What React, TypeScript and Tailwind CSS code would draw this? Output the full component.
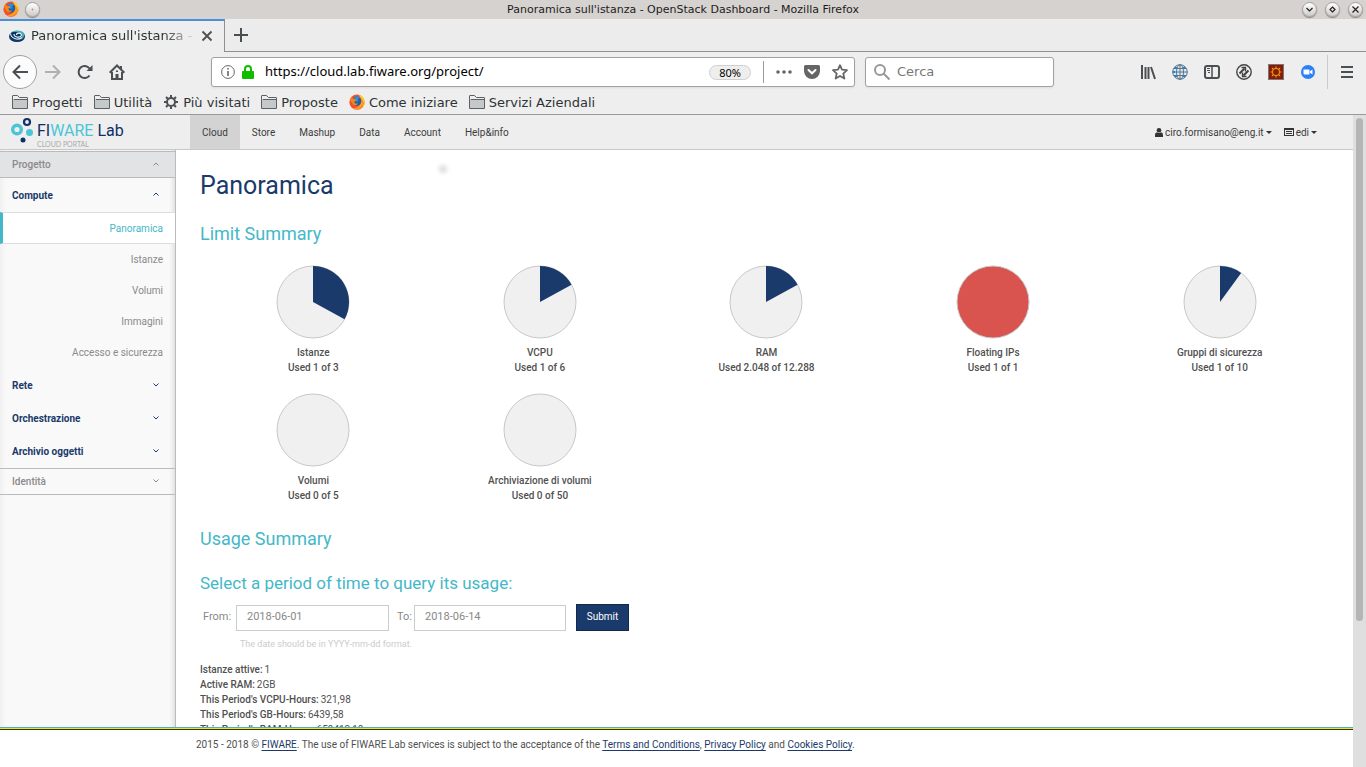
import React from "react";

const NAVY = "#1a3a6b";

function FirefoxLogo() {
  return (
    <svg viewBox="0 0 16 16" className="size-4 shrink-0" aria-hidden="true">
      <circle cx="8" cy="8.2" r="7.6" fill="#f4502a" />
      <path d="M10 .8A7.6 7.6 0 0 1 13 14c2-3 2-6 0-8.500 C12 4 10.500 3 10 .8Z" fill="#ffce2e" />
      <path d="M12 4a7 7 0 0 1 1 9 7 7 0 0 1-9 1c6 0 9-5 8-10Z" fill="#ff9a1b" />
      <circle cx="7.600" cy="7.200" r="4.600" fill="#1e5fae" />
      <path d="M5 3.500C7 1.800 10 2.400 11 4L8.500 5.500 10 7 7.500 8 6 6Z" fill="#2b91d9" />
      <path d="M1 5.500 2.500 2.500 3.500 4.500 6 5 7.500 6.500 5.500 7.500 6 9.500 9 9.500C8 11.500 5 12 3.500 10Z" fill="#f98416" />
    </svg>
  );
}

function FolderIcon() {
  return (
    <svg viewBox="0 0 16 16" className="size-4 shrink-0" fill="none" stroke="#5c6062" aria-hidden="true">
      <path d="M.5 14.500V2Q.5 1.500 1 1.500H5.500L7.500 3.500H15Q15.500 3.500 15.500 4V14.500Z" fill="#c6c9ca" />
      <path d="M1 2H5.300L7.300 4H15V5H1Z" fill="#eee" stroke="none" />
      <path d="M2 5.500H15" />
    </svg>
  );
}

function GearIcon() {
  return (
    <svg viewBox="0 0 16 16" className="size-4 shrink-0" fill="none" stroke="#4a4f51" aria-hidden="true">
      <circle cx="8" cy="8" r="4" strokeWidth="2" />
      <path
        d="M8 1v2.500M8 12.500V15M1 8h2.500M12.500 8H15M3 3l1.800 1.800M11.200 11.200 13 13M13 3l-1.800 1.800M4.800 11.200 3 13"
        strokeWidth="2"
      />
    </svg>
  );
}

function WindowButton({ label, children }: { label: string; children?: React.ReactNode }) {
  return (
    <button
      aria-label={label}
      className="flex size-[15px] items-center justify-center rounded-full border border-[#a3a09d] bg-linear-to-b from-white to-[#cfccc9] shadow-[0_1px_1px_#8a8784]"
    >
      <svg viewBox="0 0 9 9" className="size-[9px]" fill="none" stroke="#222" strokeWidth="1.200">
        {children}
      </svg>
    </button>
  );
}

function TitleBar() {
  return (
    <header className="grid h-[19px] shrink-0 grid-cols-[1fr_auto_1fr] items-center bg-[#d6d2cf] px-[3px] pb-px">
      <div className="flex items-center gap-[6px]">
        <FirefoxLogo />
        <WindowButton label="Menu">
          <circle cx="4.500" cy="4.500" r=".5" stroke="#888" strokeWidth="1" />
        </WindowButton>
      </div>
      <h1 className="text-[11px] leading-none text-[#1c1c1c]">
        Panoramica sull'istanza - OpenStack Dashboard - Mozilla Firefox
      </h1>
      <div className="flex items-center justify-end gap-2">
        <WindowButton label="Riduci"><path d="M1.500 3 4.500 6 7.500 3" /></WindowButton>
        <WindowButton label="Ingrandisci"><path d="M4.500 2 7 4.500 4.500 7 2 4.500Z" /></WindowButton>
        <WindowButton label="Chiudi"><path d="M1.500 1.500 7.500 7.500M7.500 1.500 1.500 7.500" /></WindowButton>
      </div>
    </header>
  );
}

function TabStrip() {
  return (
    <div className="flex h-[33px] shrink-0 bg-[#ececec] text-[13px] text-[#2e3436]">
      <div className="flex w-[225px] items-center border-t-2 border-r border-t-[#4a90d9] border-r-[#8f8f8f] bg-[#eee] pr-[11px] pb-px pl-2">
        <svg viewBox="0 0 18 16" className="mr-[5px] h-4 w-[18px] shrink-0" fill="none" aria-hidden="true">
          <ellipse cx="9" cy="8.500" rx="8" ry="5.500" fill="#0b3566" />
          <path d="M3 4.500C7 1.500 14 2 16 5c1 2 0 5-3 6.500 2-3 1-6-3-7-2.500-.6-5-.5-7 0Z" fill="#4ba8bb" />
          <path d="M2.500 5.500C3 11 11 12.500 14 9.500M6 6C6 10 13 10 13.500 7C13 4.500 8.500 4.500 8.500 7" stroke="#e8f4f8" strokeWidth="1.100" />
        </svg>
        <span className="min-w-0 flex-1 overflow-hidden whitespace-nowrap [mask-image:linear-gradient(to_right,black_80%,transparent)]">
          Panoramica sull'istanza - OpenStack
        </span>
        <button aria-label="Chiudi scheda" className="ml-1">
          <svg viewBox="0 0 12 12" className="size-3" stroke="#4a4f51" strokeWidth="1.800">
            <path d="M1.500 1.500 10.500 10.500M10.500 1.500 1.500 10.500" />
          </svg>
        </button>
      </div>
      <div className="flex flex-1 items-center border-b border-[#8f8f8f] pl-2">
        <button aria-label="Nuova scheda">
          <svg viewBox="0 0 16 16" className="size-4" stroke="#4a4f51" strokeWidth="2">
            <path d="M8 1V15M1 8H15" />
          </svg>
        </button>
      </div>
    </div>
  );
}

function NavBar() {
  return (
    <div className="flex h-10 shrink-0 items-center bg-[#eee] pr-[11px] pl-[3px]">
      <nav className="flex items-center">
        <button aria-label="Indietro" className="flex size-[34px] items-center justify-center rounded-full border border-[#a0a0a0] bg-[#fcfcfc]">
          <svg viewBox="0 0 16 16" className="size-4" fill="none" stroke="#4a4f51" strokeWidth="2"><path d="M16 8H1.500M8 1.500 1.500 8 8 14.500" /></svg>
        </button>
        <button aria-label="Avanti" className="ml-2">
          <svg viewBox="0 0 16 16" className="size-4" fill="none" stroke="#aeb0b1" strokeWidth="2"><path d="M0 8H14.500M8 1.500 14.500 8 8 14.500" /></svg>
        </button>
        <button aria-label="Ricarica" className="ml-4">
          <svg viewBox="0 0 16 16" className="size-4" fill="none" stroke="#4a4f51" strokeWidth="2"><path d="M12.500 11.500A6 6 0 1 1 12.500 4.500" /><path d="M15.500 1V7H9.500Z" fill="#4a4f51" stroke="none" /></svg>
        </button>
        <button aria-label="Pagina iniziale" className="ml-4">
          <svg viewBox="0 0 16 16" className="size-4" fill="none" stroke="#4a4f51" strokeWidth="2"><path d="M.7 8.700 8 1.500 15.300 8.700M3 8V15H13V8" /><path d="M8 10V15" strokeWidth="3" /><path d="M8 6.500v1.500M12 2V5" strokeWidth="2" /></svg>
        </button>
      </nav>
      <div className="ml-[86px] flex h-[30px] min-w-0 flex-[627] items-center rounded-[3px] border border-[#a1a1a1] bg-white pr-[6px] pl-[9px] shadow-[0_1px_2px_#ddd]">
        <svg viewBox="0 0 14 14" className="size-[14px] shrink-0" fill="none" stroke="#666"><circle cx="7" cy="7" r="6.400" /><path d="M7 3V4.600M7 6V11" strokeWidth="1.600" /></svg>
        <svg viewBox="0 0 12 14" className="mx-[7px] h-[14px] w-3 shrink-0" fill="none"><rect y="6" width="12" height="8" rx="1" fill="#12bc00" /><path d="M3 6V4a3 3 0 0 1 6 0V6" stroke="#12bc00" strokeWidth="2" /></svg>
        <input aria-label="Indirizzo" defaultValue="https://cloud.lab.fiware.org/project/" className="min-w-0 flex-1 bg-transparent pl-1 font-['Noto_Sans',sans-serif] text-[13px] text-black outline-none" />
        <button className="h-[15px] w-[42px] rounded-full border border-[#cfcfcf] bg-[#eee] font-['Noto_Sans',sans-serif] text-[11px] leading-none text-black">80%</button>
        <span className="ml-3 h-[22px] w-px bg-[#999]" />
        <button aria-label="Azioni" className="ml-3">
          <svg viewBox="0 0 16 16" className="size-4" fill="#666"><circle cx="2" cy="8" r="1.800" /><circle cx="8" cy="8" r="1.800" /><circle cx="14" cy="8" r="1.800" /></svg>
        </button>
        <button aria-label="Salva in Pocket" className="ml-3">
          <svg viewBox="0 0 16 16" className="size-4"><path d="M1.500 1H14.500A1.500 1.500 0 0 1 16 2.500V7A8 8 0 0 1 0 7V2.500A1.500 1.500 0 0 1 1.500 1Z" fill="#666" /><path d="M4.500 6 8 9.300 11.500 6" fill="none" stroke="#fff" strokeWidth="2" strokeLinecap="round" /></svg>
        </button>
        <button aria-label="Aggiungi ai segnalibri" className="ml-3">
          <svg viewBox="0 0 16 16" className="size-4" fill="none" stroke="#666" strokeWidth="1.800" strokeLinejoin="round"><path d="M8 1.200 10 5.700 15 6.200 11.300 9.600 12.400 14.600 8 12 3.600 14.600 4.700 9.600 1 6.200 6 5.700Z" /></svg>
        </button>
      </div>
      <div className="ml-[10px] flex h-[30px] min-w-0 flex-[171] items-center rounded-[3px] border border-[#a1a1a1] bg-white px-2 shadow-[0_1px_2px_#ddd]">
        <svg viewBox="0 0 16 16" className="mr-[7px] size-4 shrink-0" fill="none" stroke="#999" strokeWidth="2"><circle cx="6" cy="6" r="5" /><path d="M9.500 9.500 15.500 15.500" /></svg>
        <input aria-label="Cerca" placeholder="Cerca" className="min-w-0 flex-1 bg-transparent text-[13px] outline-none placeholder:text-[#777]" />
      </div>
      <div className="ml-[86px] flex items-center gap-4">
        <button aria-label="Libreria"><svg viewBox="0 0 16 16" className="size-4" stroke="#4a4f51" strokeWidth="2"><path d="M2 1V15M5.500 3V15M8.500 3V15M11 3 15 15" /></svg></button>
        <button aria-label="Rete globale">
          <svg viewBox="0 0 16 16" className="size-4" fill="none" stroke="#5f7384"><circle cx="8" cy="8" r="7.300" fill="#dde9f2" /><ellipse cx="8" cy="8" rx="3.500" ry="7.300" /><path d="M8 .7V15.300M.7 8H15.300M2 4.500H14M2 11.500H14" /><path d="M3 3h2v2H3ZM11 3h2v2h-2ZM3 11h2v2H3ZM11 11h2v2h-2ZM1 7h2v2H1Z" fill="#1a84d9" stroke="none" /></svg>
        </button>
        <button aria-label="Barra laterale"><svg viewBox="0 0 16 16" className="size-4" fill="none" stroke="#4a4f51"><rect x="1" y="2" width="14" height="12" rx="2" strokeWidth="2" /><path d="M8 2V14" strokeWidth="1.500" /><path d="M3 4.500H6M3 6.500H6M4 8.500H6" /></svg></button>
        <button aria-label="Componente aggiuntivo"><svg viewBox="0 0 16 16" className="size-4" fill="none" stroke="#444"><circle cx="8" cy="8" r="7.200" strokeWidth="1.400" /><path d="M3.500 9.500 8.500 4.500M7.500 11.500 12.500 6.500" strokeWidth="2" /><path d="M5.500 3.500H9.500V7.500M6.500 8.500V12.500H10.500" strokeWidth="1.400" /></svg></button>
        <button aria-label="Strumenti"><svg viewBox="0 0 16 16" className="size-4" fill="none"><rect x=".5" y=".5" width="15" height="15" fill="#8c1b06" stroke="#777" /><circle cx="8" cy="8" r="3.500" stroke="#e0981c" strokeWidth="1.100" /><path d="M8 2.500V4.500M8 11.500V13.500M2.500 8H4.500M11.500 8H13.500M4 4 5.300 5.300M10.700 10.700 12 12M12 4 10.700 5.300M5.300 10.700 4 12" stroke="#e0981c" strokeWidth="1.200" /></svg></button>
        <button aria-label="Zoom"><svg viewBox="0 0 16 16" className="size-4"><circle cx="8" cy="8" r="7" fill="#2d7ff9" /><path d="M3.500 5.500H9.500V10.500H4.500Q3.500 10.500 3.500 9.500ZM10 7.300 12.500 5.500V10.500L10 8.700Z" fill="#fff" /></svg></button>
      </div>
      <span className="ml-[11px] h-[34px] w-px bg-[#ccc]" />
      <button aria-label="Apri menu" className="ml-[11px]"><svg viewBox="0 0 16 16" className="size-4" stroke="#4a4f51" strokeWidth="2"><path d="M2 3H14M2 8H14M2 13H14" /></svg></button>
    </div>
  );
}

const bookmarks = [
  { label: "Progetti", icon: <FolderIcon /> },
  { label: "Utilità", icon: <FolderIcon /> },
  { label: "Più visitati", icon: <GearIcon /> },
  { label: "Proposte", icon: <FolderIcon /> },
  { label: "Come iniziare", icon: <FirefoxLogo /> },
  { label: "Servizi Aziendali", icon: <FolderIcon /> },
];

function BookmarksBar() {
  return (
    <div className="flex h-[23px] shrink-0 items-center gap-[11px] border-b border-[#999] bg-[#eee] pb-[2px] pl-3 text-[13px] text-[#2e3436]">
      {bookmarks.map((b) => (
        <button key={b.label} className="flex items-center gap-1 leading-none">
          {b.icon}
          {b.label}
        </button>
      ))}
    </div>
  );
}

function Caret() {
  return <svg viewBox="0 0 6 3" className="h-[3px] w-[6px]" fill="#333"><path d="M0 0H6L3 3Z" /></svg>;
}

function PortalHeader() {
  return (
    <header className="flex h-[35px] shrink-0 items-stretch border-b border-[#c8c8c8] bg-[#eee] text-[10px] text-[#3c3c3c]">
      <a href="#home" className="flex w-[190px] gap-[3px] pl-[10px]">
        <svg viewBox="0 0 24 30" className="mt-[2px] h-[30px] w-6" fill="none" aria-hidden="true">
          <circle cx="7" cy="12.500" r="4.300" stroke="#4bc5d6" strokeWidth="3.400" />
          <circle cx="17" cy="5" r="3" stroke="#0f2f69" strokeWidth="2.200" />
          <circle cx="19.500" cy="15.500" r="3.500" fill="#4bc5d6" />
          <circle cx="13" cy="23" r="2.500" fill="#0f2f69" />
        </svg>
        <div className="flex flex-col pt-[6px]">
          <span className="text-[16px] leading-[19px] text-[#0f2f69]">
            FI<span className="text-[#4bc5d6]">WARE</span> Lab
          </span>
          <span className="font-[Lato,sans-serif] text-[7px] leading-[8px] text-[#aaa]">CLOUD PORTAL</span>
        </div>
      </a>
      <nav className="flex">
        {["Cloud", "Store", "Mashup", "Data", "Account", "Help&info"].map((item, i) => (
          <a key={item} href={`#${item}`} className={`flex items-center px-3 ${i === 0 ? "bg-[#d3d3d3]" : ""}`}>
            {item}
          </a>
        ))}
      </nav>
      <div className="ml-auto flex items-center gap-3 pr-9">
        <button className="flex items-center gap-[2px]">
          <svg viewBox="0 0 8 9" className="h-[9px] w-2" fill="#333"><circle cx="4" cy="2.300" r="2.300" /><path d="M0 9V7Q0 4.500 2 4.300 4 5.500 6 4.300 8 4.500 8 7V9Z" /></svg>
          ciro.formisano@eng.it
          <Caret />
        </button>
        <button className="flex items-center gap-[2px]">
          <svg viewBox="0 0 10 8" className="h-2 w-[10px]" fill="none" stroke="#333"><rect x=".5" y=".5" width="9" height="7" /><path d="M1 1.500H9M2 3.500H8M2 5.500H8" /></svg>
          edi
          <Caret />
        </button>
      </div>
    </header>
  );
}

function Chevron({ up = false }: { up?: boolean }) {
  return (
    <svg viewBox="0 0 6 4" className="mb-[2px] h-1 w-[6px]" fill="none" stroke="currentColor">
      {up ? <path d="M.5 3.500 3 1 5.500 3.500" /> : <path d="M.5 .5 3 3 5.500 .5" />}
    </svg>
  );
}

function Sidebar() {
  return (
    <aside className="w-[176px] shrink-0 border-r border-[#bbb] bg-[#f9f9f9] pt-px text-[10px] text-[#8a8a8a] shadow-[inset_-4px_0_4px_-2px_#ddd,inset_4px_0_4px_-2px_#eee]">
      <button className="flex h-[27px] w-full items-center justify-between border-y border-[#bbb] bg-[#e2e3e4] pr-4 pl-3 font-medium">
        Progetto <Chevron up />
      </button>
      <button className="flex h-[34px] w-full items-center justify-between pr-4 pl-3 font-bold text-[#1a3a6b]">
        Compute <Chevron up />
      </button>
      <nav className="flex flex-col text-right">
        <a href="#panoramica" className="flex h-8 items-center justify-end border-y border-l-[3px] border-y-[#ddd] border-l-[#44b8c8] bg-white pr-3 text-[#44b8c8]">
          Panoramica
        </a>
        {["Istanze", "Volumi", "Immagini", "Accesso e sicurezza"].map((t) => (
          <a key={t} href={`#${t}`} className="flex h-[31px] items-center justify-end pr-3">
            {t}
          </a>
        ))}
      </nav>
      <div className="pt-px">
        {["Rete", "Orchestrazione", "Archivio oggetti"].map((t) => (
          <button key={t} className="flex h-[33px] w-full items-center justify-between pr-4 pl-3 font-bold text-[#1a3a6b]">
            {t} <Chevron />
          </button>
        ))}
      </div>
      <button className="flex h-[27px] w-full items-center justify-between border-y border-[#bbb] pr-4 pl-3 font-medium">
        Identità <Chevron />
      </button>
    </aside>
  );
}

type Quota = { name: string; used: string; share: number };

const quotas: Quota[] = [
  { name: "Istanze", used: "Used 1 of 3", share: 0.33 },
  { name: "VCPU", used: "Used 1 of 6", share: 0.17 },
  { name: "RAM", used: "Used 2.048 of 12.288", share: 0.17 },
  { name: "Floating IPs", used: "Used 1 of 1", share: 1 },
  { name: "Gruppi di sicurezza", used: "Used 1 of 10", share: 0.1 },
  { name: "Volumi", used: "Used 0 of 5", share: 0 },
  { name: "Archiviazione di volumi", used: "Used 0 of 50", share: 0 },
];

function Pie({ share }: { share: number }) {
  const angle = share * 2 * Math.PI;
  const x = 37 + 36 * Math.sin(angle);
  const y = 37 - 36 * Math.cos(angle);
  return (
    <svg viewBox="0 0 74 74" className="size-[74px]" aria-hidden="true">
      <circle cx="37" cy="37" r="36" fill={share === 1 ? "#d9534f" : "#f0f0f0"} stroke="#c8c8c8" />
      {share > 0 && share < 1 && <path d={`M37 37V1A36 36 0 0 1 ${x} ${y}Z`} fill={NAVY} />}
    </svg>
  );
}

const usage = [
  ["Istanze attive:", "1"],
  ["Active RAM:", "2GB"],
  ["This Period's VCPU-Hours:", "321,98"],
  ["This Period's GB-Hours:", "6439,58"],
  ["This Period's RAM-Hours:", "659413,18"],
];

function Overview() {
  return (
    <main className="min-w-0 flex-1 overflow-hidden pt-5 pr-5 pl-6 text-[10px] text-[#505050]">
      <h1 className="text-[25px] leading-8 text-[#1a3a6b]">Panoramica</h1>
      <h2 className="mt-5 text-[18px] leading-6 text-[#44b8c8]">Limit Summary</h2>
      <div className="mt-[19px] grid grid-cols-5 gap-y-[18px]">
        {quotas.map((q) => (
          <div key={q.name} className="flex flex-col items-center text-center font-medium">
            <Pie share={q.share} />
            <div className="mt-[6px] leading-[15px]">
              <div>{q.name}</div>
              <div>{q.used}</div>
            </div>
          </div>
        ))}
      </div>
      <h2 className="mt-6 text-[18px] leading-6 text-[#44b8c8]">Usage Summary</h2>
      <form className="mt-5" onSubmit={(e) => e.preventDefault()}>
        <h3 className="text-[17px] leading-6 text-[#44b8c8]">Select a period of time to query its usage:</h3>
        <div className="mt-[9px] flex items-center pl-[3px] text-[#888]">
          <label htmlFor="from" className="w-[33px] pb-px text-[11px]">From:</label>
          <input id="from" defaultValue="2018-06-01" className="h-[26px] w-[153px] border border-[#ccc] bg-white px-[10px] pb-[3px] text-[11px] outline-none" />
          <label htmlFor="to" className="ml-2 w-[17px] pb-px text-[11px]">To:</label>
          <input id="to" defaultValue="2018-06-14" className="h-[26px] w-[152px] border border-[#ccc] bg-white px-[10px] pb-[3px] text-[11px] outline-none" />
          <button className="ml-[10px] h-[27px] w-[53px] border border-[#12294d] bg-[#1a3a6b] pb-[2px] text-white">Submit</button>
        </div>
        <p className="mt-[6px] pl-10 text-[9px] leading-[15px] text-[#ccc]">The date should be in YYYY-mm-dd format.</p>
      </form>
      <dl className="mt-[10px] leading-[15px]">
        {usage.map(([name, value]) => (
          <div key={name} className="flex gap-[2px]">
            <dt className="font-medium">{name}</dt>
            <dd>{value}</dd>
          </div>
        ))}
      </dl>
    </main>
  );
}

function FooterLink({ children }: { children: string }) {
  return <a href="#legal" className="text-[#1a3a6b] underline underline-offset-2">{children}</a>;
}

function PortalFooter() {
  return (
    <footer className="h-10 shrink-0 border-t border-[#4fb5ac] bg-white">
      <div className="h-px bg-[#ffe600]" />
      <div className="h-px bg-[#1d3446]" />
      <p className="pt-[7px] pl-[196px] text-[10px] leading-[15px] text-[#505050]">
        2015 - 2018 © <FooterLink>FIWARE</FooterLink>. The use of FIWARE Lab services is subject to the acceptance of the{" "}
        <FooterLink>Terms and Conditions</FooterLink>, <FooterLink>Privacy Policy</FooterLink> and{" "}
        <FooterLink>Cookies Policy</FooterLink>.
      </p>
    </footer>
  );
}

export default function App() {
  return (
    <div className="flex h-screen flex-col overflow-hidden bg-white font-['DejaVu_Sans',sans-serif]">
      <TitleBar />
      <TabStrip />
      <NavBar />
      <BookmarksBar />
      <div className="flex min-h-0 flex-1 font-[Roboto,sans-serif]">
        <div className="relative flex min-w-0 flex-1 flex-col">
          <PortalHeader />
          <div className="flex min-h-0 flex-1">
            <Sidebar />
            <Overview />
          </div>
          <PortalFooter />
          <span className="absolute top-[50px] left-[439px] size-2 rounded-full bg-[#ddd] blur-[2px]" />
        </div>
        <div className="w-[13px] shrink-0 bg-[#dfdfdf] pt-[3px] pl-[3px]">
          <div className="h-[77.5%] w-[7px] rounded-full bg-[#b4b5b6]" />
        </div>
      </div>
    </div>
  );
}
